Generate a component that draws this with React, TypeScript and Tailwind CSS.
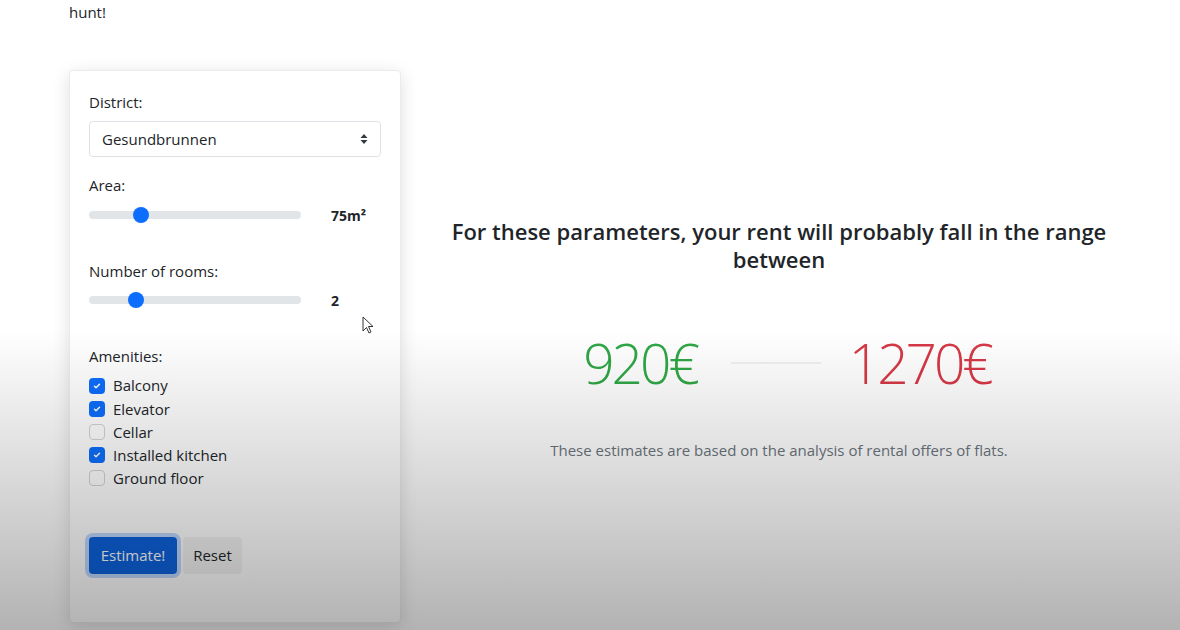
import React from 'react'

const font = { fontFamily: '"Open Sans", "Noto Sans", sans-serif' }

type Amenity = { label: string; checked: boolean }

const amenities: Amenity[] = [
  { label: 'Balcony', checked: true },
  { label: 'Elevator', checked: true },
  { label: 'Cellar', checked: false },
  { label: 'Installed kitchen', checked: true },
  { label: 'Ground floor', checked: false },
]

function Slider({ offset, value }: { offset: number; value: React.ReactNode }) {
  return (
    <div className="flex items-center h-6">
      <div className="relative w-[212px] h-2 rounded-full bg-[#e2e5e8]">
        <div
          className="absolute top-1/2 -translate-y-1/2 w-4 h-4 rounded-full bg-[#0d6efd]"
          style={{ left: offset }}
        />
      </div>
      <span className="ml-[30px] text-[14px] font-bold text-[#212529]">{value}</span>
    </div>
  )
}

function Checkbox({ checked }: { checked: boolean }) {
  if (checked) {
    return (
      <span className="flex items-center justify-center w-4 h-4 rounded-[4px] bg-[#0d6efd]">
        <svg width="10" height="10" viewBox="0 0 20 20" fill="none">
          <path d="M5 10.5l3 3 7-7" stroke="#fff" strokeWidth="3" strokeLinecap="round" strokeLinejoin="round" />
        </svg>
      </span>
    )
  }
  return <span className="w-4 h-4 rounded-[4px] border border-[#cfd4da] bg-white" />
}

export default function App() {
  return (
    <div className="relative w-[1180px] h-[630px] overflow-hidden bg-white text-[#212529]" style={font}>
      <p className="pl-[69px] text-[15px] leading-6">hunt!</p>

      <div className="flex pl-[69px] mt-[46px]">
        {/* form card */}
        <div className="w-[332px] h-[553px] bg-white border border-[#e9ecef] rounded-[4px] shadow-[0_4px_18px_rgba(0,0,0,0.13)] px-[19px] pt-[19px]">
          <div className="text-[15px] leading-6">District:</div>
          <div className="mt-[7px] h-9 flex items-center justify-between border border-[#dee2e6] rounded-[4px] pl-3 pr-3 text-[15px]">
            <span>Gesundbrunnen</span>
            <svg width="8" height="12" viewBox="0 0 8 12">
              <path d="M4 1L7.5 5H0.5z" fill="#343a40" />
              <path d="M4 11L7.5 7H0.5z" fill="#343a40" />
            </svg>
          </div>

          <div className="mt-4 text-[15px] leading-6">Area:</div>
          <div className="mt-[6px]">
            <Slider offset={44} value={<>75m²</>} />
          </div>

          <div className="mt-8 text-[15px] leading-6">Number of rooms:</div>
          <div className="mt-[5px]">
            <Slider offset={39} value="2" />
          </div>

          <div className="mt-8 text-[15px] leading-6">Amenities:</div>
          <div className="mt-[6px] flex flex-col">
            {amenities.map((a) => (
              <label key={a.label} className="flex items-center gap-2 h-[23.2px] text-[15px]">
                <Checkbox checked={a.checked} />
                <span>{a.label}</span>
              </label>
            ))}
          </div>

          <div className="mt-[47px] flex gap-[6px]">
            <button className="h-[37px] w-[88px] rounded-[4px] bg-[#0d62dd] text-white text-[15px] ring-4 ring-[#5c9dfd]/40">
              Estimate!
            </button>
            <button className="h-[37px] w-[59px] rounded-[4px] bg-[#f3f3f3] text-[15px] text-[#212529]">
              Reset
            </button>
          </div>
        </div>

        {/* result */}
        <div className="ml-[19px] w-[718px] pt-[147px] flex flex-col items-center text-center">
          <h4 className="text-[22px] leading-[28px] font-semibold">
            For these parameters, your rent will probably fall in the range between
          </h4>
          <div className="mt-[60px] ml-4 flex items-center">
            <span className="text-[55px] leading-[60px] font-light tracking-[-3px] text-[#2fa745]">920€</span>
            <span className="ml-[34px] mr-[28px] w-[90px] h-[2px] bg-[#f0f0f0]" />
            <span className="text-[55px] leading-[60px] font-light tracking-[-3px] text-[#d63846]">1270€</span>
          </div>
          <p className="mt-[46px] text-[15px] text-[#6c757d]">
            These estimates are based on the analysis of rental offers of flats.
          </p>
        </div>
      </div>

      {/* mouse pointer */}
      <svg className="absolute left-[362px] top-[316px]" width="12" height="18" viewBox="0 0 12 18">
        <path d="M1 1v14l3.5-3.5 2.5 5.5 2-1-2.5-5.5H11z" fill="#fff" stroke="#333" strokeWidth="1" strokeLinejoin="round" />
      </svg>

      {/* screen vignette */}
      <div className="pointer-events-none absolute left-0 right-0 top-[330px] h-[300px] bg-linear-to-b from-black/0 to-black/30" />
    </div>
  )
}
